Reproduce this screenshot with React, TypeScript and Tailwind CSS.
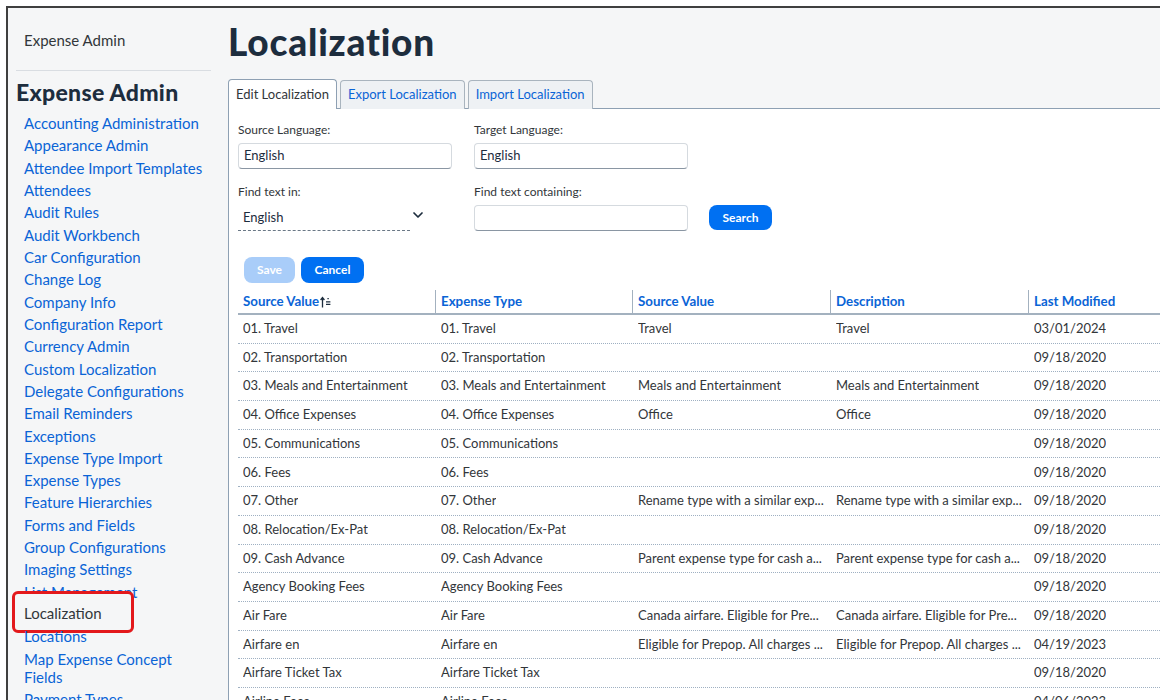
import { ChevronDown } from 'lucide-react'

const adminLinks = [
  'Accounting Administration',
  'Appearance Admin',
  'Attendee Import Templates',
  'Attendees',
  'Audit Rules',
  'Audit Workbench',
  'Car Configuration',
  'Change Log',
  'Company Info',
  'Configuration Report',
  'Currency Admin',
  'Custom Localization',
  'Delegate Configurations',
  'Email Reminders',
  'Exceptions',
  'Expense Type Import',
  'Expense Types',
  'Feature Hierarchies',
  'Forms and Fields',
  'Group Configurations',
  'Imaging Settings',
  'List Management',
  'Localization',
  'Locations',
  'Map Expense Concept Fields',
  'Payment Types',
]

type Row = [string, string, string, string, string]

const rows: Row[] = [
  ['01. Travel', '01. Travel', 'Travel', 'Travel', '03/01/2024'],
  ['02. Transportation', '02. Transportation', '', '', '09/18/2020'],
  ['03. Meals and Entertainment', '03. Meals and Entertainment', 'Meals and Entertainment', 'Meals and Entertainment', '09/18/2020'],
  ['04. Office Expenses', '04. Office Expenses', 'Office', 'Office', '09/18/2020'],
  ['05. Communications', '05. Communications', '', '', '09/18/2020'],
  ['06. Fees', '06. Fees', '', '', '09/18/2020'],
  ['07. Other', '07. Other', 'Rename type with a similar exp...', 'Rename type with a similar exp...', '09/18/2020'],
  ['08. Relocation/Ex-Pat', '08. Relocation/Ex-Pat', '', '', '09/18/2020'],
  ['09. Cash Advance', '09. Cash Advance', 'Parent expense type for cash a...', 'Parent expense type for cash a...', '09/18/2020'],
  ['Agency Booking Fees', 'Agency Booking Fees', '', '', '09/18/2020'],
  ['Air Fare', 'Air Fare', 'Canada airfare. Eligible for Pre...', 'Canada airfare. Eligible for Pre...', '09/18/2020'],
  ['Airfare en', 'Airfare en', 'Eligible for Prepop. All charges ...', 'Eligible for Prepop. All charges ...', '04/19/2023'],
  ['Airfare Ticket Tax', 'Airfare Ticket Tax', '', '', '09/18/2020'],
  ['Airline Fees', 'Airline Fees', '', '', '04/06/2023'],
]

const colWidths = ['w-[197px]', 'w-[197px]', 'w-[198px]', 'w-[198px]', 'w-[200px]']

function SortAscIcon() {
  return (
    <svg width="11" height="12" viewBox="0 0 11 12" fill="none" stroke="currentColor" strokeWidth="1.3">
      <path d="M2.5 11.5V1.8M0.6 4 2.5 1.6 4.4 4" />
      <path d="M7.4 2.6h1.4M6 5.8h4.4M6 8.3h4.4" />
    </svg>
  )
}

function Sidebar() {
  return (
    <aside className="relative w-[207px] shrink-0 pl-2 pr-1 pt-[22px]">
      <div className="pl-2 text-[15px] leading-[20px] text-[#32363a]">Expense Admin</div>
      <div className="mt-[20px] h-px bg-[#d9dde2]" />
      <h2 className="mt-[7px] text-[23px] leading-[28px] font-black tracking-[0.3px] text-[#1d2d3e]">Expense Admin</h2>
      <ul className="mt-[6px] pl-2">
        {adminLinks.map((name) => (
          <li key={name} className="relative text-[15px] leading-[18px] py-[2.17px]">
            {name === 'Localization' ? (
              <>
                <span className="invisible">{name}</span>
                {/* highlight frame around the current page */}
                <span className="absolute left-[-12px] top-[-12px] w-[122px] h-[42px] rounded-[6px] border-[3px] border-[#e3191c] bg-[#f5f6f7] flex items-center pl-[9px] pt-[3px] text-[#32363a]">
                  {name}
                </span>
              </>
            ) : (
              <a className="text-[#0a64d6]">{name}</a>
            )}
          </li>
        ))}
      </ul>
    </aside>
  )
}

function TextInput({ value, className = '' }: { value?: string; className?: string }) {
  return (
    <div
      className={
        'h-[26px] w-[214px] rounded-[4px] border border-[#d5dadf] border-b-[#8a96a3] bg-white px-[5px] flex items-center text-[13px] text-[#1d2d3e] ' +
        className
      }
    >
      {value}
    </div>
  )
}

function Main() {
  return (
    <main className="flex-1 min-w-0 pl-[13px] pt-[13px] flex flex-col">
      <h1 className="text-[37px] leading-[41px] font-black text-[#1d2d3e] tracking-[0.8px]">Localization</h1>

      {/* tabs */}
      <div className="mt-[17px] flex items-end gap-[3px] h-[30px] relative z-10 -mb-px">
        <div className="h-[30px] px-[7px] flex items-center rounded-t-[4px] border border-b-0 border-[#8ea0b3] bg-white text-[13px] text-[#32363a]">
          Edit Localization
        </div>
        <div className="h-[29px] px-[7px] flex items-center rounded-t-[4px] border border-b-0 border-[#a9b4be] bg-[#eef1f4] text-[13px] text-[#0a64d6]">
          Export Localization
        </div>
        <div className="h-[29px] px-[7px] flex items-center rounded-t-[4px] border border-b-0 border-[#a9b4be] bg-[#eef1f4] text-[13px] text-[#0a64d6]">
          Import Localization
        </div>
      </div>

      <section className="flex-1 bg-white border-l border-t border-[#8ea0b3] pl-[9px] pt-[13px]">
        <div className="flex">
          <div className="w-[236px]">
            <div className="text-[12px] leading-[16px] text-[#32363a]">Source Language:</div>
            <TextInput value="English" className="mt-[5px]" />
          </div>
          <div>
            <div className="text-[12px] leading-[16px] text-[#32363a]">Target Language:</div>
            <TextInput value="English" className="mt-[5px]" />
          </div>
        </div>

        <div className="mt-[15px] flex items-end">
          <div className="w-[236px]">
            <div className="text-[12px] leading-[16px] text-[#32363a]">Find text in:</div>
            <div className="mt-[5px] flex items-center">
              <div className="h-[26px] w-[172px] border-b border-dashed border-[#6a7886] pl-[5px] flex items-center text-[13px] text-[#1d2d3e]">
                English
              </div>
              <ChevronDown className="ml-0 -mt-[6px] h-[16px] w-[16px] text-[#1d2d3e]" strokeWidth={2.6} />
            </div>
          </div>
          <div>
            <div className="text-[12px] leading-[16px] text-[#32363a]">Find text containing:</div>
            <TextInput className="mt-[5px]" />
          </div>
          <button className="ml-[21px] mb-px h-[25px] w-[63px] rounded-[8px] bg-[#0070f2] text-[12px] font-bold text-white">
            Search
          </button>
        </div>

        <div className="mt-[26px] ml-[6px] flex gap-[6px]">
          <button className="h-[26px] w-[51px] rounded-[8px] bg-[#a9cdf9] text-[12px] font-bold text-white">Save</button>
          <button className="h-[26px] w-[63px] rounded-[8px] bg-[#0070f2] text-[12px] font-bold text-white">Cancel</button>
        </div>

        {/* results grid */}
        <div className="mt-[7px] w-[990px]">
          <div className="flex h-[25px] border-b-2 border-[#a3b1bf]">
            {['Source Value', 'Expense Type', 'Source Value', 'Description', 'Last Modified'].map((h, i) => (
              <div
                key={i}
                className={
                  colWidths[i] +
                  ' flex items-center pl-[5px] text-[13.3px] font-bold text-[#0a64d6] ' +
                  (i > 0 ? 'border-l border-[#a3b1bf]' : '')
                }
              >
                {h}
                {i === 0 && (
                  <span className="ml-px text-[#1d2d3e]">
                    <SortAscIcon />
                  </span>
                )}
              </div>
            ))}
          </div>
          {rows.map((r, ri) => (
            <div key={ri} className="flex h-[28.7px] border-b border-dotted border-[#9fb0c2]">
              {r.map((cell, ci) => (
                <div
                  key={ci}
                  className={
                    colWidths[ci] +
                    ' flex items-center text-[13px] text-[#32363a] whitespace-nowrap overflow-hidden ' +
                    (ci === 0 ? 'pl-[5px]' : 'pl-[6px]')
                  }
                >
                  <span className="truncate">{cell}</span>
                </div>
              ))}
            </div>
          ))}
        </div>
      </section>
    </main>
  )
}

export default function App() {
  return (
    <div className="w-[1160px] h-[700px] overflow-hidden bg-white pt-[6px] pl-[6px] font-['Lato',sans-serif]">
      <div className="flex h-[694px] border-t-2 border-l-2 border-[#3f3f3f] bg-[#f5f6f7]">
        <Sidebar />
        <Main />
      </div>
    </div>
  )
}
